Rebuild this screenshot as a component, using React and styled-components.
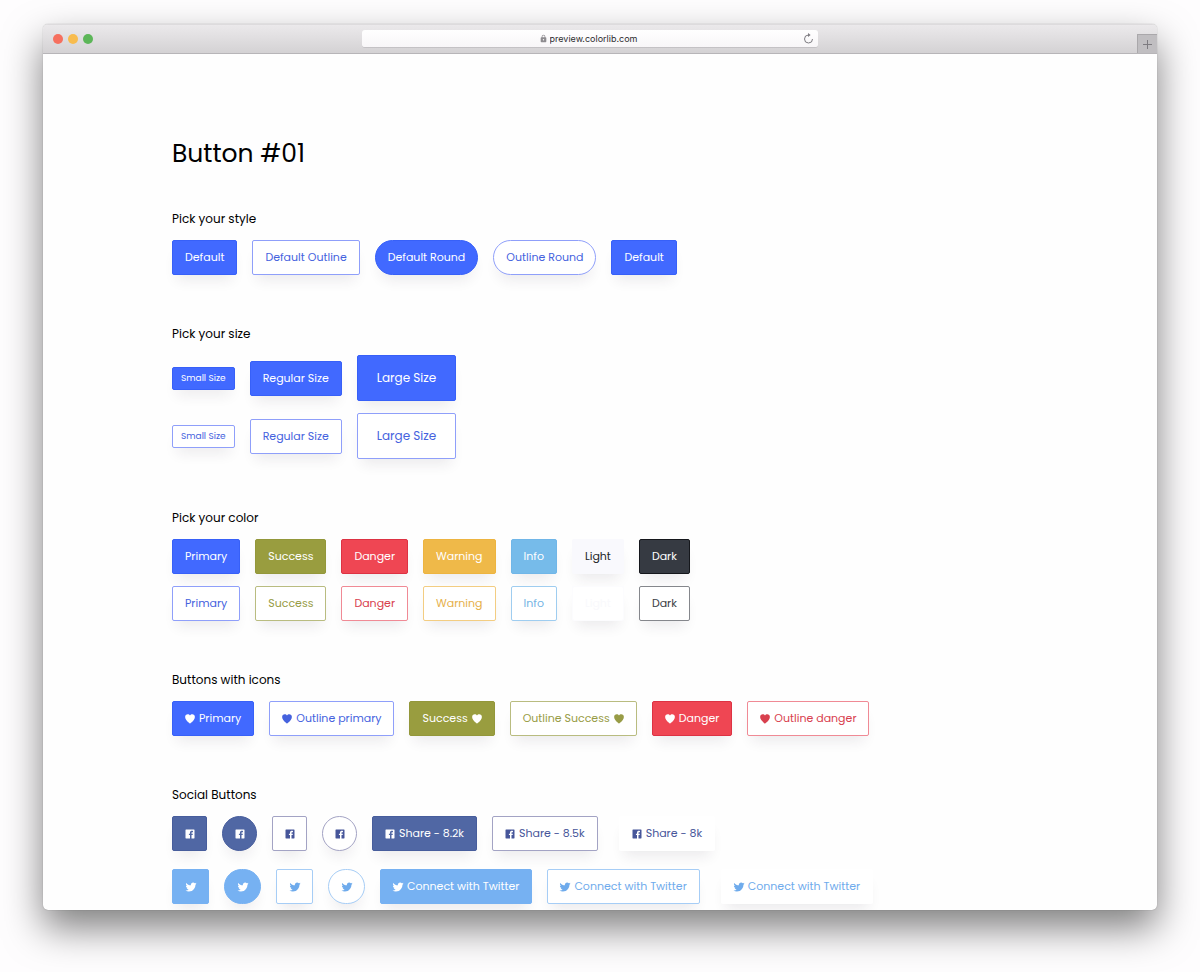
import React from 'react';
import styled, { createGlobalStyle, css } from 'styled-components';
import {
  IoIosHeart,
  IoLogoFacebook,
  IoLogoTwitter,
  IoMdLock,
} from 'react-icons/io';

const GlobalStyle = createGlobalStyle`
  * {
    box-sizing: border-box;
  }
  body {
    margin: 0;
    background: #fefdfe;
    font-family: Poppins, Inter, 'Open Sans', sans-serif;
    color: #000;
  }
`;

const palette = {
  primary: { fill: '#4169ff', edge: '#3760f8', line: '#8f9ffa', text: '#4562de' },
  success: { fill: '#999d3f', edge: '#93973a', line: '#b9bc80', text: '#989c46' },
  danger: { fill: '#ef4653', edge: '#dd3243', line: '#f08a95', text: '#d8404e' },
  warning: { fill: '#efb949', edge: '#edb440', line: '#f3cd82', text: '#e6b04a' },
  info: { fill: '#76bbea', edge: '#70b6e8', line: '#9fcdf0', text: '#74b4e4' },
  light: { fill: '#f9f9fd', edge: '#f9f9fd', line: '#fcfcfe', text: '#f9f9fc' },
  dark: { fill: '#363a42', edge: '#15171c', line: '#85878c', text: '#3a3d44' },
  facebook: { fill: '#5067a4', edge: '#475d9c', line: '#a3a3c4', text: '#47569a' },
  twitter: { fill: '#76b1f2', edge: '#76b1f2', line: '#a6cdf6', text: '#6fabec' },
};

const Page = styled.div`
  height: 100vh;
  padding: 24px 43px 62px;
  overflow: hidden;
`;

const Window = styled.div`
  height: 100%;
  display: flex;
  flex-direction: column;
  overflow: hidden;
  background: #fefefe;
  border-radius: 5px;
  box-shadow: 0 0 1px rgba(0, 0, 0, 0.4), 0 18px 38px rgba(0, 0, 0, 0.5);
`;

const Toolbar = styled.header`
  flex: none;
  height: 30px;
  display: grid;
  grid-template-columns: 1fr minmax(0, 456px) 1fr 20px;
  align-items: center;
  background: linear-gradient(#ebe9eb, #d4d2d4);
  border-top: 1px solid #dddbdd;
  border-bottom: 1px solid #b7b5b8;
`;

const Lights = styled.div`
  display: flex;
  gap: 5px;
  padding-left: 10px;
`;

const Light = styled.button`
  width: 10px;
  height: 10px;
  padding: 0;
  border: none;
  border-radius: 50%;
  background: ${(props) => props.$color};
`;

const AddressBar = styled.form`
  height: 18px;
  display: grid;
  grid-template-columns: 20px 1fr 20px;
  align-items: center;
  background: linear-gradient(#fff, #f8f6f8);
  border-radius: 3px;
  border-bottom: 1px solid #c4c2c5;
`;

const Address = styled.label`
  grid-column: 2;
  display: flex;
  align-items: center;
  justify-content: center;
  gap: 2px;
  color: #8e8c90;
`;

const AddressInput = styled.input`
  width: 92px;
  padding: 0;
  border: none;
  outline: none;
  background: transparent;
  font: 9px/16px Inter, sans-serif;
  color: #2c2b2e;
`;

const BarButton = styled.button`
  display: flex;
  align-items: center;
  justify-content: center;
  padding: 0;
  border: none;
  background: none;
  color: #7d7b80;
`;

const NewTab = styled(BarButton)`
  align-self: end;
  height: 19px;
  background: #c0bec1;
  border-left: 1px solid #aaa8ab;
  border-top: 1px solid #aaa8ab;
`;

const Content = styled.main`
  flex: 1;
  min-height: 0;
  width: 100%;
  max-width: 856px;
  margin: 0 auto;
  padding-top: 82px;
`;

const Title = styled.h1`
  margin: 0 0 38px;
  font-size: 25px;
  line-height: 36px;
  font-weight: 400;
`;

const Section = styled.section`
  margin-bottom: 50px;
`;

const SectionTitle = styled.h2`
  margin: 0 0 12px;
  font-size: 12px;
  line-height: 18px;
  font-weight: 400;
`;

const Rows = styled.div`
  display: flex;
  flex-direction: column;
  gap: ${(props) => props.$gap || 12}px;
`;

const Row = styled.div`
  display: flex;
  align-items: center;
  gap: 15px;
`;

const sizes = {
  small: css`
    height: 23px;
    padding: 0 8px;
    font-size: 9px;
  `,
  regular: css`
    height: 35px;
    padding: 0 12px;
    font-size: 11px;
  `,
  large: css`
    height: 46px;
    padding: 0 19px;
    font-size: 12px;
  `,
};

const variants = {
  solid: css`
    background: ${(props) => palette[props.$color].fill};
    border-color: ${(props) => palette[props.$color].edge};
    color: ${(props) => (props.$color === 'light' ? '#212529' : '#fff')};
  `,
  outline: css`
    background: #fff;
    border-color: ${(props) => palette[props.$color].line};
    color: ${(props) => palette[props.$color].text};
  `,
  ghost: css`
    margin-left: 6px;
    background: #fff;
    border-color: transparent;
    color: ${(props) => palette[props.$color].text};
  `,
};

const StyledButton = styled.button`
  display: inline-flex;
  align-items: center;
  justify-content: center;
  gap: 4px;
  border: 1px solid;
  border-radius: ${(props) => (props.$round ? 24 : 2)}px;
  font-family: inherit;
  font-weight: 400;
  white-space: nowrap;
  cursor: pointer;
  box-shadow: 0 10px 14px -5px rgba(40, 30, 50, 0.09);
  ${(props) => sizes[props.$size]}
  ${(props) => variants[props.$variant]}

  svg {
    margin: 0 -1px;
  }
`;

const IconButton = styled(StyledButton)`
  width: ${(props) => (props.$color === 'twitter' ? 37 : 35)}px;
  padding: 0;
`;

const Button = ({
  children,
  color = 'primary',
  variant = 'solid',
  size = 'regular',
  round = false,
}) => (
  <StyledButton
    type='button'
    $color={color}
    $variant={variant}
    $size={size}
    $round={round}
  >
    {children}
  </StyledButton>
);

const SocialIcons = ({ color, name, icon }) =>
  ['solid', 'outline'].map((variant) =>
    [false, true].map((round) => (
      <IconButton
        key={`${variant}-${round}`}
        type='button'
        aria-label={name}
        $color={color}
        $variant={variant}
        $size='regular'
        $round={round}
      >
        {icon}
      </IconButton>
    ))
  );

const colors = [
  ['primary', 'Primary'],
  ['success', 'Success'],
  ['danger', 'Danger'],
  ['warning', 'Warning'],
  ['info', 'Info'],
  ['light', 'Light'],
  ['dark', 'Dark'],
];

const heart = <IoIosHeart size={12} />;
const facebook = <IoLogoFacebook size={12} />;
const twitter = <IoLogoTwitter size={12} />;

const App = () => (
  <>
    <GlobalStyle />
    <Page>
      <Window>
        <Toolbar>
          <Lights>
            <Light type='button' aria-label='Close' $color='#f6705f' />
            <Light type='button' aria-label='Minimize' $color='#f8bc4e' />
            <Light type='button' aria-label='Zoom' $color='#5cb658' />
          </Lights>
          <AddressBar onSubmit={(e) => e.preventDefault()}>
            <Address>
              <IoMdLock size={9} />
              <AddressInput
                aria-label='Address'
                defaultValue='preview.colorlib.com'
              />
            </Address>
            <BarButton type='button' aria-label='Reload'>
              <svg width='11' height='11' viewBox='0 0 11 11' fill='none'>
                <path
                  d='M6 2H5.5A4 4 0 1 0 9.5 6'
                  stroke='currentColor'
                />
                <path d='M5 0L7.6 2L5 4Z' fill='currentColor' />
              </svg>
            </BarButton>
          </AddressBar>
          <span />
          <NewTab type='button' aria-label='New tab'>
            <svg width='9' height='9' viewBox='0 0 9 9'>
              <path d='M4.5 0V9M0 4.5H9' stroke='currentColor' />
            </svg>
          </NewTab>
        </Toolbar>
        <Content>
          <Title>Button #01</Title>

          <Section>
            <SectionTitle>Pick your style</SectionTitle>
            <Row>
              <Button>Default</Button>
              <Button variant='outline'>Default Outline</Button>
              <Button round>Default Round</Button>
              <Button variant='outline' round>
                Outline Round
              </Button>
              <Button>Default</Button>
            </Row>
          </Section>

          <Section>
            <SectionTitle>Pick your size</SectionTitle>
            <Rows>
              {['solid', 'outline'].map((variant) => (
                <Row key={variant}>
                  <Button variant={variant} size='small'>
                    Small Size
                  </Button>
                  <Button variant={variant}>Regular Size</Button>
                  <Button variant={variant} size='large'>
                    Large Size
                  </Button>
                </Row>
              ))}
            </Rows>
          </Section>

          <Section>
            <SectionTitle>Pick your color</SectionTitle>
            <Rows>
              {['solid', 'outline'].map((variant) => (
                <Row key={variant}>
                  {colors.map(([color, label]) => (
                    <Button key={color} color={color} variant={variant}>
                      {label}
                    </Button>
                  ))}
                </Row>
              ))}
            </Rows>
          </Section>

          <Section>
            <SectionTitle>Buttons with icons</SectionTitle>
            <Row>
              <Button>{heart} Primary</Button>
              <Button variant='outline'>{heart} Outline primary</Button>
              <Button color='success'>Success {heart}</Button>
              <Button color='success' variant='outline'>
                Outline Success {heart}
              </Button>
              <Button color='danger'>{heart} Danger</Button>
              <Button color='danger' variant='outline'>
                {heart} Outline danger
              </Button>
            </Row>
          </Section>

          <Section>
            <SectionTitle>Social Buttons</SectionTitle>
            <Rows $gap={18}>
              <Row>
                <SocialIcons color='facebook' name='Facebook' icon={facebook} />
                <Button color='facebook'>{facebook} Share - 8.2k</Button>
                <Button color='facebook' variant='outline'>
                  {facebook} Share - 8.5k
                </Button>
                <Button color='facebook' variant='ghost'>
                  {facebook} Share - 8k
                </Button>
              </Row>
              <Row>
                <SocialIcons color='twitter' name='Twitter' icon={twitter} />
                <Button color='twitter'>{twitter} Connect with Twitter</Button>
                <Button color='twitter' variant='outline'>
                  {twitter} Connect with Twitter
                </Button>
                <Button color='twitter' variant='ghost'>
                  {twitter} Connect with Twitter
                </Button>
              </Row>
            </Rows>
          </Section>
        </Content>
      </Window>
    </Page>
  </>
);

export default App;
